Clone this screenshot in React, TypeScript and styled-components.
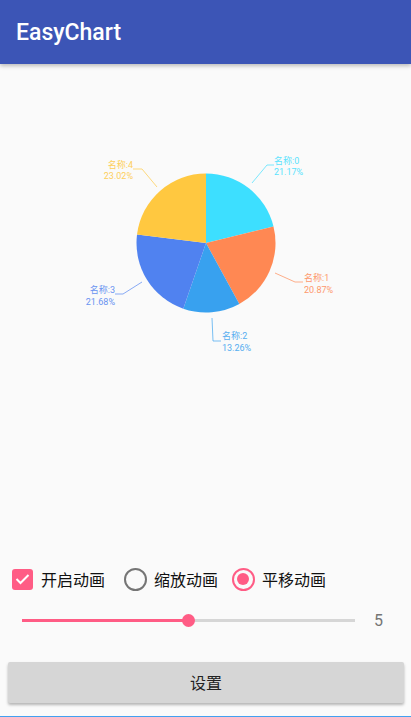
import React from 'react'
import styled, { createGlobalStyle } from 'styled-components'

const FONT = `Roboto, "Noto Sans CJK SC", sans-serif`

const GlobalStyle = createGlobalStyle`
  html, body {
    margin: 0;
    padding: 0;
    background: #fafafa;
    font-family: ${FONT};
  }
`

const Page = styled.div`
  width: 411px;
  height: 717px;
  display: flex;
  flex-direction: column;
  background: #fafafa;
  border-bottom: 1px solid #42a0f0;
  box-sizing: border-box;
  overflow: hidden;
`

const AppBar = styled.header`
  height: 64px;
  flex: none;
  display: flex;
  align-items: center;
  padding-left: 16px;
  background: #3c55b6;
  color: #fff;
  font-size: 23px;
  font-weight: 500;
  box-shadow: 0 2px 4px rgba(0, 0, 0, 0.25);
  position: relative;
`

const ChartArea = styled.main`
  flex: 1;
  min-height: 0;
`

const PieSvg = styled.svg`
  display: block;
`

const OptionRow = styled.div`
  display: flex;
  align-items: center;
  height: 24px;
  padding-left: 12px;
`

const Option = styled.label<{ $gap: number; $width: number }>`
  display: flex;
  align-items: center;
  gap: ${({ $gap }) => $gap}px;
  width: ${({ $width }) => $width}px;
  font-size: 16px;
  color: #111;
  white-space: nowrap;
`

const CheckBox = styled.span`
  width: 21px;
  height: 21px;
  flex: none;
  border-radius: 3px;
  background: #ff5c85;
  display: flex;
  align-items: center;
  justify-content: center;
`

const Radio = styled.span<{ $on?: boolean }>`
  width: 23px;
  height: 23px;
  flex: none;
  box-sizing: border-box;
  border-radius: 50%;
  border: 2.5px solid ${({ $on }) => ($on ? '#ff5c85' : '#757575')};
  display: flex;
  align-items: center;
  justify-content: center;
`

const RadioDot = styled.span`
  width: 12px;
  height: 12px;
  border-radius: 50%;
  background: #ff5c85;
`

const SliderRow = styled.div`
  display: flex;
  align-items: center;
  height: 20px;
  margin-top: 19px;
  padding-left: 22px;
`

const Track = styled.div`
  position: relative;
  width: 333px;
  height: 3px;
  background: #d6d6d6;
`

const TrackFill = styled.div`
  height: 100%;
  background: #ff5c85;
`

const Thumb = styled.span`
  position: absolute;
  top: 50%;
  width: 13px;
  height: 13px;
  margin: -6.5px 0 0 -6.5px;
  border-radius: 50%;
  background: #ff5c85;
`

const SliderValue = styled.span`
  margin-left: 19px;
  font-size: 16px;
  color: #757575;
`

const SubmitButton = styled.button`
  display: block;
  width: 396px;
  height: 41px;
  margin: 32px 0 13px 8px;
  padding: 0 0 2px;
  border: 0;
  border-radius: 2px;
  background: #d6d6d6;
  color: #222;
  font-family: ${FONT};
  font-size: 16px;
  box-shadow: 0 2px 3px rgba(0, 0, 0, 0.28);
`

const CX = 206
const CY = 179
const R = 69.5

type Slice = {
  name: string
  pct: number
  color: string
  line: string
  textX: number
  nameY: number
  pctY: number
  anchor: 'start' | 'end'
}

const slices: Slice[] = [
  { name: '名称:0', pct: 21.17, color: '#3ddfff', line: '252,119 267,101 274,101', textX: 274, nameY: 100, pctY: 111, anchor: 'start' },
  { name: '名称:1', pct: 20.87, color: '#ff8853', line: '275,209 295,218 303,218', textX: 304, nameY: 217, pctY: 229, anchor: 'start' },
  { name: '名称:2', pct: 13.26, color: '#38a1ef', line: '212,254 213,277 221,277', textX: 222, nameY: 275, pctY: 287, anchor: 'start' },
  { name: '名称:3', pct: 21.68, color: '#5082f0', line: '142,218 123,230 115,230', textX: 115, nameY: 229, pctY: 241, anchor: 'end' },
  { name: '名称:4', pct: 23.02, color: '#ffc840', line: '157,123 142,105 133,105', textX: 133, nameY: 104, pctY: 115, anchor: 'end' },
]

// cumulative angles clockwise from 12 o'clock
const point = (pct: number) => {
  const a = (pct / 100) * Math.PI * 2
  return `${CX + R * Math.sin(a)} ${CY - R * Math.cos(a)}`
}

const PieChart = () => {
  let start = 0
  return (
    <PieSvg width={411} height={400} viewBox="0 0 411 400">
      {slices.map((s) => {
        const from = start
        start += s.pct
        const large = s.pct > 50 ? 1 : 0
        return (
          <path
            key={s.name}
            fill={s.color}
            d={`M${CX} ${CY} L${point(from)} A${R} ${R} 0 ${large} 1 ${point(start)} Z`}
          />
        )
      })}
      {slices.map((s) => (
        <g key={s.name} fontFamily={FONT} fontSize="9" fill={s.color} textAnchor={s.anchor}>
          <polyline points={s.line} fill="none" stroke={s.color} strokeWidth="0.8" opacity="0.85" />
          <text x={s.textX} y={s.nameY} opacity="0.85">{s.name}</text>
          <text x={s.textX} y={s.pctY} opacity="0.85">{s.pct.toFixed(2)}%</text>
        </g>
      ))}
    </PieSvg>
  )
}

export default function App() {
  return (
    <Page>
      <GlobalStyle />
      <AppBar>EasyChart</AppBar>
      <ChartArea>
        <PieChart />
      </ChartArea>
      <OptionRow>
        <Option $gap={8} $width={112}>
          <CheckBox>
            <svg width="15" height="12" viewBox="0 0 15 12">
              <path d="M1.5 6 L5.5 10 L13.5 2" fill="none" stroke="#fff" strokeWidth="2" />
            </svg>
          </CheckBox>
          开启动画
        </Option>
        <Option $gap={7} $width={107.5}>
          <Radio />
          缩放动画
        </Option>
        <Option $gap={7.5} $width={110}>
          <Radio $on>
            <RadioDot />
          </Radio>
          平移动画
        </Option>
      </OptionRow>
      <SliderRow>
        <Track>
          <TrackFill style={{ width: '50%' }} />
          <Thumb style={{ left: '50%' }} />
        </Track>
        <SliderValue>5</SliderValue>
      </SliderRow>
      <SubmitButton>设置</SubmitButton>
    </Page>
  )
}
